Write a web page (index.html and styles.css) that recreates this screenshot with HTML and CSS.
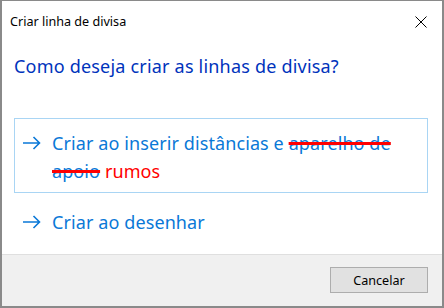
FILE: index.html
```html
<!DOCTYPE html>
<html lang="pt">
<head>
<meta charset="utf-8">
<link rel="stylesheet" href="styles.css">
</head>
<body>
<div class="window">
  <div class="titlebar">
    <span class="title">Criar linha de divisa</span>
    <svg class="close" width="12" height="12" viewBox="0 0 12 12"><path d="M0.5 0.5 L11.5 11.5 M11.5 0.5 L0.5 11.5" stroke="#000" stroke-width="1" fill="none"/></svg>
  </div>
  <div class="content">
    <h1 class="heading">Como deseja criar as linhas de divisa?</h1>
    <div class="links">
      <div class="link hover">
        <svg class="arrow" width="18" height="14" viewBox="0 0 18 14"><path d="M0 7 H16.5 M10.5 1 L16.5 7 L10.5 13" stroke="#0a78d7" stroke-width="1.6" fill="none"/></svg>
        <span class="label">Criar ao inserir distâncias e <s class="strike">aparelho de</s> <s class="strike">apoio</s> <span class="red">rumos</span></span>
      </div>
      <div class="link">
        <svg class="arrow" width="18" height="14" viewBox="0 0 18 14"><path d="M0 7 H16.5 M10.5 1 L16.5 7 L10.5 13" stroke="#0a78d7" stroke-width="1.6" fill="none"/></svg>
        <span class="label">Criar ao desenhar</span>
      </div>
    </div>
  </div>
  <div class="footer">
    <button class="btn">Cancelar</button>
  </div>
</div>
</body>
</html>
```

FILE: styles.css
```css
html, body {
  margin: 0;
  padding: 0;
  background: #fff;
}
.window {
  width: 440px;
  height: 305px;
  border: 2px solid #8a8a8a;
  border-top-width: 1px;
  display: flex;
  flex-direction: column;
  font-family: "Noto Sans", "Open Sans", sans-serif;
  background: #fff;
}
.titlebar {
  height: 40px;
  display: flex;
  align-items: center;
  justify-content: space-between;
  padding: 0 15px 0 8px;
}
.title {
  font-size: 12.6px;
  color: #000;
}
.close {
  display: block;
  margin-top: 1px;
}
.content {
  flex: 1;
  padding: 0 14px 0 12px;
}
.heading {
  margin: 13px 0 0 0;
  font-size: 18px;
  font-weight: normal;
  color: #0033bc;
  line-height: 24px;
  letter-spacing: 0.2px;
}
.links {
  margin-top: 40px;
  display: flex;
  flex-direction: column;
  gap: 4px;
}
.link {
  display: flex;
  align-items: flex-start;
  border: 1px solid transparent;
  padding: 10px 8px 7px 8px;
}
.link.hover {
  border-color: #a9d5f4;
}
.arrow {
  flex: none;
  margin-top: 7px;
  margin-right: 11px;
}
.label {
  font-size: 18px;
  line-height: 28px;
  color: #0a78d7;
  letter-spacing: 0.1px;
}
.strike {
  text-decoration: line-through;
  text-decoration-color: #ff0000;
  text-decoration-thickness: 3px;
}
.red {
  color: #ff0000;
}
.footer {
  height: 52px;
  box-sizing: border-box;
  border-top: 1px solid #dfdfdf;
  background: #f0f0f0;
  display: flex;
  justify-content: flex-end;
  align-items: flex-start;
  padding: 12px 14px 0 0;
}
.btn {
  width: 98px;
  height: 26px;
  border: 1px solid #adadad;
  background: #e1e1e1;
  font-family: "Noto Sans", "Open Sans", sans-serif;
  font-size: 12.6px;
  color: #000;
  padding: 0;
}
```
